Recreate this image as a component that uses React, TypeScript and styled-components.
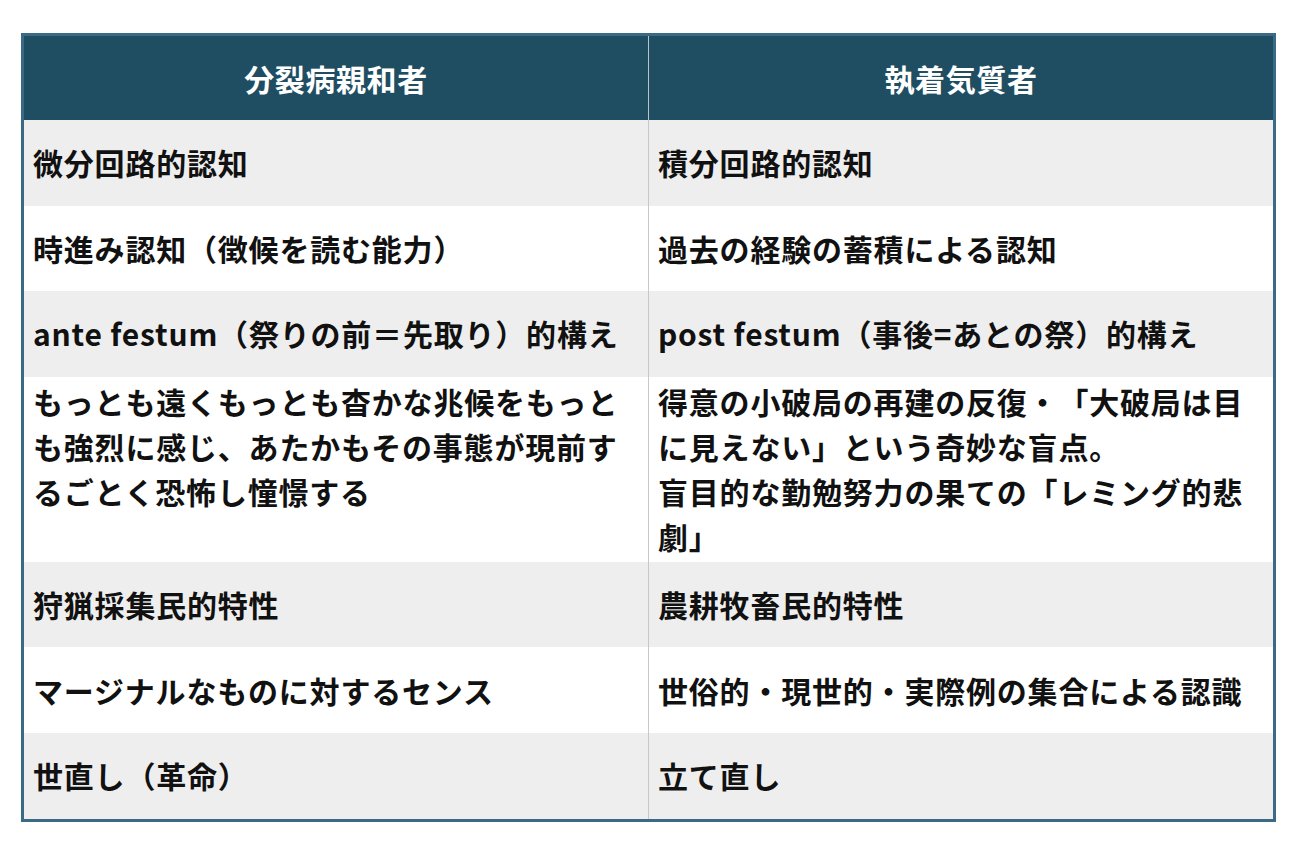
import React from "react";
import styled, { createGlobalStyle } from "styled-components";

const Global = createGlobalStyle`
  html, body { margin: 0; padding: 0; background: #ffffff; }
  body { font-family: "Noto Sans CJK JP", "Noto Sans", sans-serif; }
`;

const Page = styled.div`
  padding: 33px 14px 20px 21px;
`;

const Table = styled.div`
  width: 1255px;
  box-sizing: border-box;
  border: 3px solid #3b6a87;
  display: grid;
  grid-template-columns: 624px 1px 624px;
`;

const HeadCell = styled.div`
  height: 84px;
  background: #1f4e63;
  color: #ffffff;
  display: flex;
  align-items: center;
  justify-content: center;
  font-size: 30px;
  font-weight: 700;
  letter-spacing: 0.6px;
`;

const Divider = styled.div<{ $head?: boolean }>`
  background: ${(p) => (p.$head ? "#b9c4ca" : "#c8c8c8")};
`;

const Cell = styled.div<{ $shade: boolean; $top: boolean }>`
  min-height: 85.6px;
  box-sizing: border-box;
  padding: 2.5px 9px 2.5px 9px;
  background: ${(p) => (p.$shade ? "#eeeeee" : "#ffffff")};
  color: #111111;
  display: flex;
  flex-direction: column;
  justify-content: ${(p) => (p.$top ? "flex-start" : "center")};
  font-size: 30px;
  font-weight: 700;
  line-height: 45px;
  letter-spacing: 0.8px;
  text-spacing-trim: space-all;
`;

const Line = styled.div``;

const rows: [string[], string[]][] = [
  [["微分回路的認知"], ["積分回路的認知"]],
  [["時進み認知（徴候を読む能力）"], ["過去の経験の蓄積による認知"]],
  [["ante festum（祭りの前＝先取り）的構え"], ["post festum（事後=あとの祭）的構え"]],
  [
    ["もっとも遠くもっとも杳かな兆候をもっとも強烈に感じ、あたかもその事態が現前するごとく恐怖し憧憬する"],
    [
      "得意の小破局の再建の反復・「大破局は目に見えない」という奇妙な盲点。",
      "盲目的な勤勉努力の果ての「レミング的悲劇」",
    ],
  ],
  [["狩猟採集民的特性"], ["農耕牧畜民的特性"]],
  [["マージナルなものに対するセンス"], ["世俗的・現世的・実際例の集合による認識"]],
  [["世直し（革命）"], ["立て直し"]],
];

export default function App() {
  return (
    <Page>
      <Global />
      <Table>
        <HeadCell>分裂病親和者</HeadCell>
        <Divider $head />
        <HeadCell>執着気質者</HeadCell>
        {rows.map(([left, right], i) => {
          const top = left.join("").length > 30 || right.join("").length > 30;
          return (
            <React.Fragment key={i}>
              <Cell $shade={i % 2 === 0} $top={top}>
                {left.map((t, j) => (
                  <Line key={j}>{t}</Line>
                ))}
              </Cell>
              <Divider />
              <Cell $shade={i % 2 === 0} $top={top}>
                {right.map((t, j) => (
                  <Line key={j}>{t}</Line>
                ))}
              </Cell>
            </React.Fragment>
          );
        })}
      </Table>
    </Page>
  );
}
